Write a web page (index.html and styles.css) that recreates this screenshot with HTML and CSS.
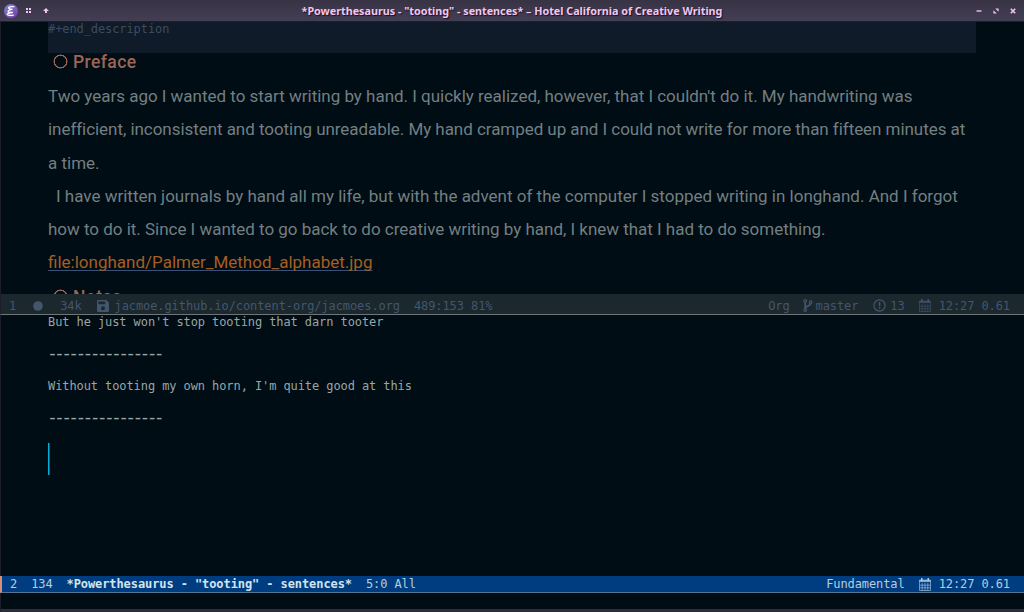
FILE: index.html
```html
<!DOCTYPE html>
<html lang="en">
<head>
<meta charset="utf-8">
<title>Hotel California of Creative Writing</title>
<link rel="stylesheet" href="styles.css">
</head>
<body>
<div class="frame">
  <header class="titlebar">
    <div class="left-tools">
      <svg class="emacs" viewBox="0 0 14 14"><defs><linearGradient id="g" x1="0" y1="0" x2="1" y2="1"><stop offset="0" stop-color="#7f86c9"/><stop offset="1" stop-color="#7a3bb0"/></linearGradient></defs><circle cx="7" cy="7" r="7" fill="url(#g)"/><path d="M9.8 2.7C6.5 2.4 4.2 3.1 4.7 4.2C5 5 6.5 5.2 8.4 5.2C5.5 5.8 3.6 7 4 7.8C4.4 8.6 7 8.4 8.9 8.4C5.3 9 3 9.5 3.4 10.5C3.9 11.6 6.8 11.5 9.3 11.1" fill="none" stroke="#fff" stroke-width="1.25" stroke-linecap="round"/></svg>
      <svg class="dots" viewBox="0 0 6 5"><path d="M0 0h2v2H0zM3 0h2v2h-2zM0 3h2v2H0zM3 3h2v2h-2z" fill="#f0c4ee"/></svg>
      <svg class="up" viewBox="0 0 6 5"><path d="M3 0L6 3H4V5H2V3H0z" fill="#f0c4ee"/></svg>
    </div>
    <h1 class="title">*Powerthesaurus - "tooting" - sentences* – Hotel California of Creative Writing</h1>
    <div class="right-tools">
      <svg viewBox="0 0 6 6"><path d="M.5 2.3h5v1.4h-5z" fill="#f0c4ee"/></svg>
      <svg viewBox="0 0 6 6"><path d="M2.2 .4H5.6V3.8zM.4 2.2V5.6H3.8z" fill="#f0c4ee"/></svg>
      <svg viewBox="0 0 6 6"><path d="M.8 .8L5.2 5.2M5.2 .8L.8 5.2" stroke="#f0c4ee" stroke-width="1.6"/></svg>
    </div>
  </header>

  <main class="org">
    <div class="block-end">#+end_description</div>
    <h2 class="heading"><span class="bullet"></span><span class="heading-text">Preface</span></h2>
    <div class="prose">
      <div class="line l1">Two years ago I wanted to start writing by hand. I quickly realized, however, that I couldn't do it. My handwriting was</div>
      <div class="line l2">inefficient, inconsistent and tooting unreadable. My hand cramped up and I could not write for more than fifteen minutes at</div>
      <div class="line l3">a time.</div>
      <div class="line l4">I have written journals by hand all my life, but with the advent of the computer I stopped writing in longhand. And I forgot</div>
      <div class="line l5">how to do it. Since I wanted to go back to do creative writing by hand, I knew that I had to do something.</div>
      <div class="line l6"><a class="link">file:longhand/Palmer_Method_alphabet.jpg</a></div>
    </div>
    <h2 class="heading notes"><span class="bullet"></span><span class="heading-text">Notes</span></h2>
  </main>

  <div class="modeline inactive">
    <span class="num">1</span>
    <svg class="disc" viewBox="0 0 10 10"><circle cx="5" cy="5" r="4.8" fill="currentColor"/></svg>
    <span class="size">34k</span>
    <svg class="save" viewBox="0 0 12 12"><path fill-rule="evenodd" fill="currentColor" d="M1.3 0H9.3L12 2.7V10.7Q12 12 10.7 12H1.3Q0 12 0 10.7V1.3Q0 0 1.3 0zM1.4 1.4V4.3H8.2V1.4zM6 6.3A2 2 0 1 0 6 10.3A2 2 0 1 0 6 6.3z"/></svg>
    <span class="path">jacmoe.github.io/content-org/jacmoes.org</span>
    <span class="pos">489:153 81%</span>
    <span class="mode">Org</span>
    <svg class="branch" viewBox="0 0 10 13"><g fill="none" stroke="currentColor" stroke-width="1.2"><circle cx="2.2" cy="2" r="1.3"/><circle cx="2.2" cy="11" r="1.3"/><circle cx="7.7" cy="3.2" r="1.3"/><path stroke-width="1.7" d="M2.2 3.3V9.7M7.7 4.5C7.7 7.3 2.4 6.5 2.4 9.5"/></g></svg>
    <span>master</span>
    <svg class="alert" viewBox="0 0 13 13"><circle cx="6.5" cy="6.5" r="5.6" fill="none" stroke="currentColor" stroke-width="1.2"/><path d="M5.8 3h1.5v4.2H5.8zM5.8 8.3h1.5v1.5H5.8z" fill="currentColor"/></svg>
    <span>13</span>
    <svg class="cal" viewBox="0 0 12 13"><path d="M.5 2h11v10.5H.5zM.5 7.2h11M.5 9.8h11M3.2 4.7v7.8M6 4.7v7.8M8.8 4.7v7.8" fill="none" stroke="currentColor" stroke-width=".6"/><path d="M.5 2.2h11v1.5H.5zM2 0h1.5v3H2zM8.5 0H10v3H8.5z" fill="currentColor"/></svg>
    <span class="clock">12:27 0.61</span>
  </div>

  <section class="thesaurus">
    <div class="row">But he just won't stop tooting that darn tooter</div>
    <div class="row dashes">----------------</div>
    <div class="row">Without tooting my own horn, I'm quite good at this</div>
    <div class="row dashes">----------------</div>
    <div class="cursor"></div>
  </section>

  <div class="modeline active">
    <span class="num">2</span>
    <span class="size2">134</span>
    <b class="buffer">*Powerthesaurus - "tooting" - sentences*</b>
    <span class="pos">5:0 All</span>
    <span class="mode">Fundamental</span>
    <svg class="cal" viewBox="0 0 12 13"><path d="M.5 2h11v10.5H.5zM.5 7.2h11M.5 9.8h11M3.2 4.7v7.8M6 4.7v7.8M8.8 4.7v7.8" fill="none" stroke="currentColor" stroke-width=".6"/><path d="M.5 2.2h11v1.5H.5zM2 0h1.5v3H2zM8.5 0H10v3H8.5z" fill="currentColor"/></svg>
    <span class="clock">12:27 0.61</span>
  </div>
  <div class="echo"></div>
</div>
</body>
</html>
```
FILE: styles.css
```css
* { box-sizing: border-box; }
body { margin: 0; background: #000d14; }
svg { display: block; flex: none; }
.frame {
  width: 1024px; height: 612px; overflow: hidden;
  display: flex; flex-direction: column;
  background: #000d14;
  font: 12px/16px "DejaVu Sans Mono", monospace;
  letter-spacing: -0.09px;
  white-space: nowrap;
}
.titlebar {
  height: 21px; flex: none; display: grid;
  grid-template-columns: 150px 1fr 150px; align-items: center;
  background: linear-gradient(#373344, #443e54);
}
.left-tools { display: flex; align-items: center; padding-left: 4px; }
.emacs { width: 14px; height: 14px; }
.dots { width: 6px; height: 5px; margin-left: 8px; }
.up { width: 6px; height: 5px; margin-left: 11px; }
.title {
  margin: 0; text-align: center; color: #f3c5f1;
  font: bold 10.75px/20px "Noto Sans", sans-serif; letter-spacing: 0;
  text-shadow: 1px 1px 1px #15131c;
}
.right-tools { display: flex; justify-content: flex-end; gap: 11px; padding-right: 8px; }
.right-tools svg { width: 6px; height: 6px; }

.org { height: 273px; flex: none; overflow: hidden; padding: 0 48px 0 47px; border-left: 1px solid #1d1c2b; border-top: 1px solid #1a2030; }
.block-end { height: 31px; background: #0f1b28; color: #3b4d61; line-height: 14px; }
.heading {
  margin: 0; height: 27px; padding-left: 5px;
  display: flex; align-items: flex-start; gap: 5px;
  color: #9c6656; font: 500 17.5px/18px Roboto, sans-serif;
}
.bullet { width: 15px; height: 15px; flex: none; margin-top: 1px; background: radial-gradient(circle, transparent 5.4px, #9c6656 5.9px, #9c6656 6.7px, transparent 7.2px); }
.heading-text { letter-spacing: 0.4px; }
.prose { font: 17px/33.3px Roboto, sans-serif; color: #737f82; }
.line { height: 33.3px; letter-spacing: 0; }
.l1 { letter-spacing: -0.015px; }
.l2 { letter-spacing: -0.05px; }
.l4 { padding-left: 8px; }
.l5 { letter-spacing: -0.02px; }
.link { color: #a55f24; text-decoration: underline #3a5075; text-underline-offset: 2px; text-decoration-thickness: 1px; text-decoration-skip-ink: none; }
.notes { padding-top: 8px; }

.modeline { flex: none; display: flex; align-items: center; padding: 0 14px 0 8px; border-left: 1px solid #1d1c2b; }
.inactive { height: 21px; padding-top: 3px; background: #1b282d; color: #44566e; border-bottom: 1px solid #707579; }
.disc { width: 10px; height: 10px; margin-left: 17px; }
.size { margin-left: 17px; }
.save { width: 12px; height: 12px; margin-left: 15px; }
.path { margin-left: 6px; }
.pos { margin-left: 14px; }
.mode { margin-left: auto; }
.branch { width: 10px; height: 13px; margin: 0 3px 0 13px; }
.alert { width: 13px; height: 13px; margin: 0 4px 0 15px; }
.cal { width: 12px; height: 13px; margin: 0 8px 0 14px; }

.thesaurus { height: 261px; flex: none; padding-left: 47px; border-left: 1px solid #1d1c2b; color: #97a6a8; }
.row { height: 32px; line-height: 14px; }
.dashes { font-size: 18px; letter-spacing: -3.72px; line-height: 11px; text-indent: -1px; }
.cursor { width: 2px; height: 32px; background: linear-gradient(90deg, #00b0d8 50%, #005c75 50%); }

.active { height: 17px; background: #003d80; color: #b4cddd; border-bottom: 1px solid #527592; border-left: 2px solid #d98e7b; padding-left: 8px; }
.size2 { margin-left: 14px; }
.buffer { margin-left: 14px; color: #d0e5ef; }
.echo { height: 19px; flex: none; border-left: 1px solid #1d1c2b; border-bottom: 3px solid #302d3a; }
```
